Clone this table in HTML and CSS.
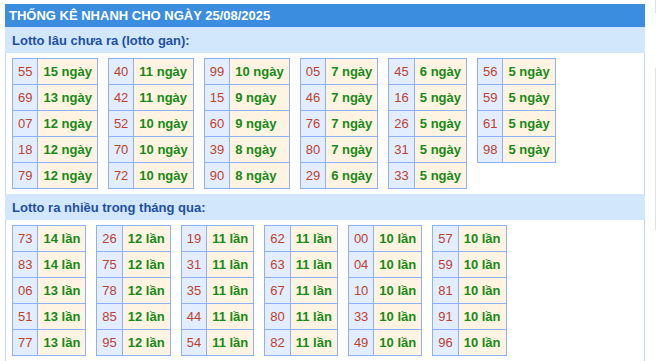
FILE: index.html
```html
<!DOCTYPE html>
<html lang="vi">
<head>
<meta charset="utf-8">
<title>Thống kê nhanh</title>
<link rel="stylesheet" href="styles.css">
</head>
<body>
<div class="page">
  <div class="box">
    <div class="title">THỐNG KÊ NHANH CHO NGÀY 25/08/2025</div>
    <div class="sub">Lotto lâu chưa ra (lotto gan):</div>
    <div class="group">
      <table class="lt"><tr><td class="n">55</td><td class="v">15 ngày</td></tr><tr><td class="n">69</td><td class="v">13 ngày</td></tr><tr><td class="n">07</td><td class="v">12 ngày</td></tr><tr><td class="n">18</td><td class="v">12 ngày</td></tr><tr><td class="n">79</td><td class="v">12 ngày</td></tr></table>
      <table class="lt"><tr><td class="n">40</td><td class="v">11 ngày</td></tr><tr><td class="n">42</td><td class="v">11 ngày</td></tr><tr><td class="n">52</td><td class="v">10 ngày</td></tr><tr><td class="n">70</td><td class="v">10 ngày</td></tr><tr><td class="n">72</td><td class="v">10 ngày</td></tr></table>
      <table class="lt"><tr><td class="n">99</td><td class="v">10 ngày</td></tr><tr><td class="n">15</td><td class="v">9 ngày</td></tr><tr><td class="n">60</td><td class="v">9 ngày</td></tr><tr><td class="n">39</td><td class="v">8 ngày</td></tr><tr><td class="n">90</td><td class="v">8 ngày</td></tr></table>
      <table class="lt"><tr><td class="n">05</td><td class="v">7 ngày</td></tr><tr><td class="n">46</td><td class="v">7 ngày</td></tr><tr><td class="n">76</td><td class="v">7 ngày</td></tr><tr><td class="n">80</td><td class="v">7 ngày</td></tr><tr><td class="n">29</td><td class="v">6 ngày</td></tr></table>
      <table class="lt"><tr><td class="n">45</td><td class="v">6 ngày</td></tr><tr><td class="n">16</td><td class="v">5 ngày</td></tr><tr><td class="n">26</td><td class="v">5 ngày</td></tr><tr><td class="n">31</td><td class="v">5 ngày</td></tr><tr><td class="n">33</td><td class="v">5 ngày</td></tr></table>
      <table class="lt"><tr><td class="n">56</td><td class="v">5 ngày</td></tr><tr><td class="n">59</td><td class="v">5 ngày</td></tr><tr><td class="n">61</td><td class="v">5 ngày</td></tr><tr><td class="n">98</td><td class="v">5 ngày</td></tr></table>
    </div>
    <div class="sub">Lotto ra nhiều trong tháng qua:</div>
    <div class="group">
      <table class="lt"><tr><td class="n">73</td><td class="v">14 lần</td></tr><tr><td class="n">83</td><td class="v">14 lần</td></tr><tr><td class="n">06</td><td class="v">13 lần</td></tr><tr><td class="n">51</td><td class="v">13 lần</td></tr><tr><td class="n">77</td><td class="v">13 lần</td></tr></table>
      <table class="lt"><tr><td class="n">26</td><td class="v">12 lần</td></tr><tr><td class="n">75</td><td class="v">12 lần</td></tr><tr><td class="n">78</td><td class="v">12 lần</td></tr><tr><td class="n">85</td><td class="v">12 lần</td></tr><tr><td class="n">95</td><td class="v">12 lần</td></tr></table>
      <table class="lt"><tr><td class="n">19</td><td class="v">11 lần</td></tr><tr><td class="n">31</td><td class="v">11 lần</td></tr><tr><td class="n">35</td><td class="v">11 lần</td></tr><tr><td class="n">44</td><td class="v">11 lần</td></tr><tr><td class="n">54</td><td class="v">11 lần</td></tr></table>
      <table class="lt"><tr><td class="n">62</td><td class="v">11 lần</td></tr><tr><td class="n">63</td><td class="v">11 lần</td></tr><tr><td class="n">67</td><td class="v">11 lần</td></tr><tr><td class="n">80</td><td class="v">11 lần</td></tr><tr><td class="n">82</td><td class="v">11 lần</td></tr></table>
      <table class="lt"><tr><td class="n">00</td><td class="v">10 lần</td></tr><tr><td class="n">04</td><td class="v">10 lần</td></tr><tr><td class="n">10</td><td class="v">10 lần</td></tr><tr><td class="n">33</td><td class="v">10 lần</td></tr><tr><td class="n">49</td><td class="v">10 lần</td></tr></table>
      <table class="lt"><tr><td class="n">57</td><td class="v">10 lần</td></tr><tr><td class="n">59</td><td class="v">10 lần</td></tr><tr><td class="n">81</td><td class="v">10 lần</td></tr><tr><td class="n">91</td><td class="v">10 lần</td></tr><tr><td class="n">96</td><td class="v">10 lần</td></tr></table>
    </div>
  </div>
  <div class="side">
    <div class="side-a"></div>
    <div class="side-b"></div>
  </div>
</div>
</body>
</html>
```

FILE: styles.css
```css
html, body {
  margin: 0;
  padding: 0;
  background: #ffffff;
  overflow: hidden;
}

body {
  font-family: "Liberation Sans", Arial, sans-serif;
  font-size: 13px;
}

.page {
  display: flex;
  align-items: flex-start;
  height: 361px;
}

.box {
  box-sizing: border-box;
  width: 640px;
  margin: 4px 0 0 5px;
  border-left: 1px solid #c6d5ec;
  border-right: 1px solid #c6d5ec;
  height: 357px;
}

.title {
  margin: 0 -1px;
  height: 23px;
  line-height: 23px;
  padding-left: 4px;
  background: #3b8de0;
  color: #ffffff;
  font-weight: bold;
}

.sub {
  margin: 0 -1px;
  box-sizing: border-box;
  height: 26px;
  line-height: 24px;
  padding: 2px 0 0 7px;
  background: #d3e7fc;
  color: #1c4fa4;
  font-weight: bold;
}

.group {
  display: flex;
  align-items: flex-start;
  gap: 10px;
  padding: 5px 0 5px 6px;
}

.lt {
  border-collapse: collapse;
}

.lt td {
  border: 1px solid #8db0f6;
  padding: 0 5px;
  line-height: 25px;
  white-space: nowrap;
}

.lt .n {
  background: #e2eeff;
  color: #bd412b;
}

.lt .v {
  background: #fff3e2;
  color: #168a16;
  font-weight: bold;
}

.side {
  margin-left: 10px;
  width: 1px;
  flex: none;
}

.side-a {
  height: 13px;
  border-left: 1px solid #e2e2e2;
}

.side-b {
  margin-top: 55px;
  height: 162px;
  border-left: 1px solid #e2e2e2;
}
```
